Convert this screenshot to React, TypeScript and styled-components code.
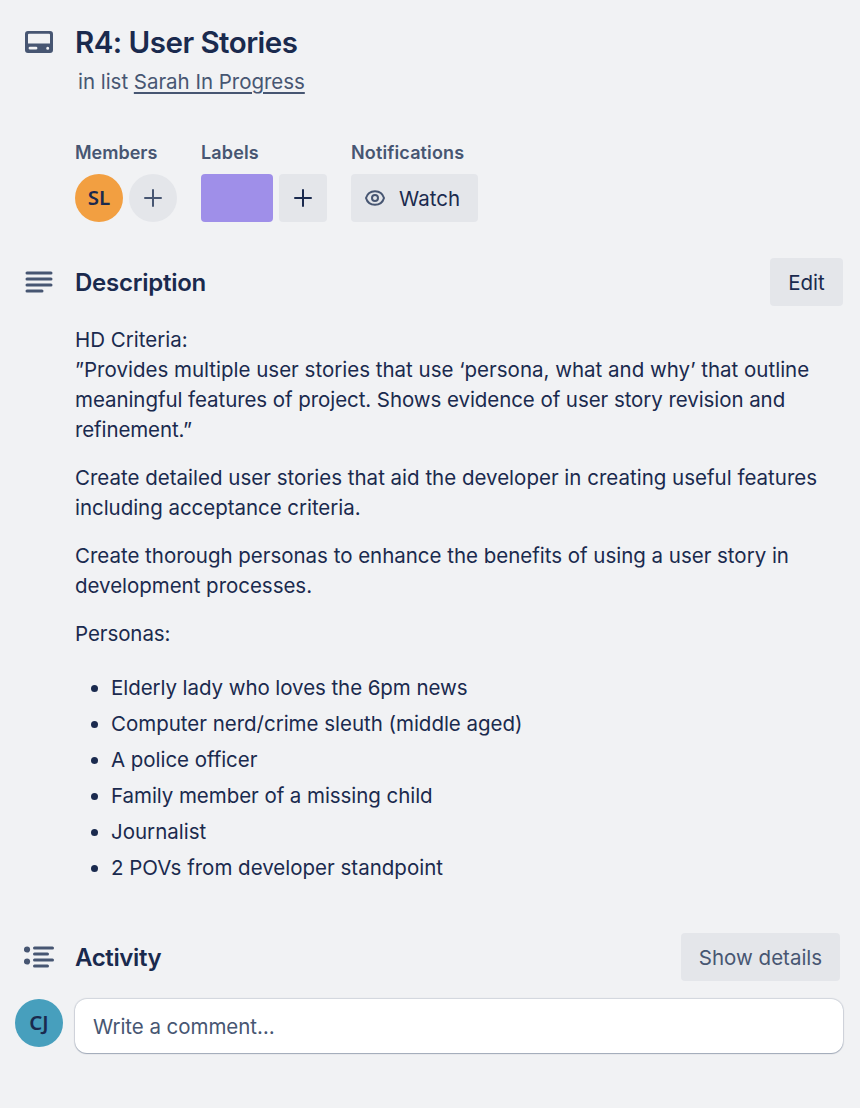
import React from "react";
import styled, { createGlobalStyle } from "styled-components";

const navy = "#1a2a4e";
const slate = "#475672";
const neutral = "#e4e6ea";

const GlobalStyle = createGlobalStyle`
  *, *::before, *::after { box-sizing: border-box; }
  body {
    margin: 0;
    background: #f1f2f4;
    color: ${navy};
    font-family: Inter, "Liberation Sans", sans-serif;
    font-size: 20.5px;
    line-height: 30px;
  }
  h1, h2, h3, p, ul { margin: 0; padding: 0; font-weight: inherit; }
`;

const Card = styled.main`
  width: 860px;
  height: 1108px;
  padding: 24px 16px 0 15px;
  display: flex;
  flex-direction: column;
`;

const Row = styled.div<{ $top?: number; $height?: number; $right?: number }>`
  display: grid;
  grid-template-columns: 48px 1fr auto;
  column-gap: 12px;
  align-items: center;
  margin-top: ${(p) => p.$top ?? 0}px;
  padding-right: ${(p) => p.$right ?? 0}px;
  height: ${(p) => (p.$height ? `${p.$height}px` : "auto")};
`;

const IconSlot = styled.span`
  display: flex;
  justify-content: center;
  svg { display: block; }
`;

const Title = styled.h1`
  font-size: 29.5px;
  line-height: 36px;
  font-weight: 600;
  letter-spacing: -0.53px;
`;

const Text = styled.span<{ $ls?: number }>`
  letter-spacing: ${(p) => p.$ls ?? 0}px;
  white-space: nowrap;
`;

const ListLine = styled.p`
  padding-left: 63px;
  margin-top: 7px;
  color: ${slate};
`;

const ListLink = styled.a`
  text-decoration: underline;
  text-decoration-thickness: 2px;
  text-underline-offset: 3px;
`;

const Details = styled.section`
  display: flex;
  gap: 24px;
  margin: 44px 0 0 60px;
`;

const Field = styled.div`
  display: flex;
  flex-direction: column;
`;

const FieldName = styled.h3<{ $ls?: number }>`
  font-size: 18px;
  line-height: 24px;
  font-weight: 600;
  color: ${slate};
  height: 33px;
  width: 0;
  white-space: nowrap;
  letter-spacing: ${(p) => p.$ls ?? 0}px;
`;

const FieldItems = styled.div`
  display: flex;
  gap: 6px;
`;

const Avatar = styled.span<{ $bg: string }>`
  width: 48px;
  height: 48px;
  border-radius: 50%;
  background: ${(p) => p.$bg};
  display: flex;
  align-items: center;
  justify-content: center;
  padding-bottom: 3px;
  font-family: "Noto Sans", "Open Sans", sans-serif;
  font-size: 20.5px;
  font-weight: 600;
`;

const Button = styled.button<{ $width: number; $round?: boolean; $subtle?: boolean }>`
  width: ${(p) => p.$width}px;
  height: 48px;
  padding: 0;
  border: 0;
  border-radius: ${(p) => (p.$round ? "50%" : "4px")};
  background: ${neutral};
  color: ${(p) => (p.$subtle ? slate : navy)};
  font: inherit;
  display: flex;
  align-items: center;
  justify-content: center;
  ${Text} { padding-top: 2px; }
`;

const WatchButton = styled(Button)`
  justify-content: flex-start;
  padding-left: 14px;
  gap: 14px;
  svg { color: ${slate}; margin-bottom: 1px; }
`;

const LabelSwatch = styled.span`
  width: 72px;
  height: 48px;
  border-radius: 4px;
  background: #9f8fe9;
`;

const Heading = styled.h2<{ $ls: number }>`
  font-size: 24px;
  line-height: 30px;
  font-weight: 600;
  letter-spacing: ${(p) => p.$ls}px;
  padding-top: 2px;
`;

const Body = styled.div`
  padding: 19px 0 0 60px;
`;

const Paragraph = styled.p`
  margin-bottom: 18px;
  display: flex;
  flex-direction: column;
`;

const Bullets = styled.ul`
  list-style: none;
  margin-top: 24px;
`;

const Bullet = styled.li`
  height: 36px;
  line-height: 30px;
  display: flex;
  padding-left: 16px;
  &::before {
    content: "";
    width: 7px;
    height: 7px;
    margin: 12px 13px 0 0;
    border-radius: 50%;
    background: ${navy};
  }
`;

const Comment = styled.div`
  height: 54px;
  border-radius: 12px;
  background: #fff;
  box-shadow: 0 1px 1px #091e4240, 0 0 1px 1px #091e4222;
  color: ${slate};
  display: flex;
  align-items: center;
  padding: 1px 0 0 18px;
`;

const CommentRow = styled.div`
  display: grid;
  grid-template-columns: 48px 768px;
  column-gap: 12px;
  margin-top: 18px;
`;

const Plus = () => (
  <svg width="20" height="20" viewBox="0 0 20 20" fill="none" stroke="currentColor" strokeWidth="2" strokeLinecap="round">
    <path d="M10 2v16M2 10h16" />
  </svg>
);

const CardIcon = () => (
  <svg width="28" height="22" viewBox="0 0 28 22" fill="none">
    <path fill={slate} fillRule="evenodd" d="M3 0h22A3 3 0 0 1 28 3v16a3 3 0 0 1-3 3H3a3 3 0 0 1-3-3V3A3 3 0 0 1 3 0ZM4 2.700Q3 2.700 3 3.700V12.500h22V3.700Q25 2.700 24 2.700ZM5 15.800a1.400 1.400 0 0 0 0 2.800h6a1.400 1.400 0 0 0 0-2.800ZM22.700 15.700a1.500 1.500 0 1 0 0 3 1.500 1.500 0 0 0 0-3Z" />
  </svg>
);

const DescriptionIcon = () => (
  <svg width="28" height="22" viewBox="0 0 28 22" stroke={slate} strokeWidth="3" strokeLinecap="round">
    <path d="M2 2h24M2 8h24M2 14h24M2 20h15" />
  </svg>
);

const ActivityIcon = () => (
  <svg width="30" height="22" viewBox="0 0 30 22" stroke={slate} strokeWidth="3" strokeLinecap="round">
    <path d="M10.500 2h18M10.500 8h13M10.500 14h18M10.500 20h13" />
    <circle cx="3" cy="3.500" r="3.100" fill={slate} stroke="none" />
    <circle cx="3" cy="15.500" r="3.100" fill={slate} stroke="none" />
  </svg>
);

const Eye = () => (
  <svg width="20" height="16" viewBox="0 0 20 16" fill="none" stroke="currentColor" strokeWidth="2">
    <path d="M1 8C2.300 3.500 5.500 1.200 10 1.200S17.700 3.500 19 8c-1.300 4.500-4.500 6.800-9 6.800S2.300 12.500 1 8Z" strokeLinejoin="round" />
    <circle cx="10" cy="8" r="3" />
  </svg>
);

type Line = { text: string; ls?: number };

const paragraphs: Line[][] = [
  [
    { text: "HD Criteria:" },
    { text: "”Provides multiple user stories that use ‘persona, what and why’ that outline" },
    { text: "meaningful features of project. Shows evidence of user story revision and", ls: -0.07 },
    { text: "refinement.”", ls: -0.12 },
  ],
  [
    { text: "Create detailed user stories that aid the developer in creating useful features" },
    { text: "including acceptance criteria.", ls: -0.04 },
  ],
  [
    { text: "Create thorough personas to enhance the benefits of using a user story in", ls: -0.02 },
    { text: "development processes.", ls: -0.03 },
  ],
  [{ text: "Personas:", ls: -0.08 }],
];

const personas: Line[] = [
  { text: "Elderly lady who loves the 6pm news", ls: -0.07 },
  { text: "Computer nerd/crime sleuth (middle aged)", ls: -0.02 },
  { text: "A police officer", ls: -0.05 },
  { text: "Family member of a missing child", ls: -0.06 },
  { text: "Journalist" },
  { text: "2 POVs from developer standpoint" },
];

export default function App() {
  return (
    <Card>
      <GlobalStyle />
      <Row $height={36}>
        <IconSlot><CardIcon /></IconSlot>
        <Title>R4: User Stories</Title>
      </Row>
      <ListLine>
        <Text $ls={-0.03}>in list <ListLink>Sarah In Progress</ListLink></Text>
      </ListLine>

      <Details>
        <Field>
          <FieldName>Members</FieldName>
          <FieldItems>
            <Avatar $bg="#f29f41">SL</Avatar>
            <Button $width={48} $round $subtle aria-label="Add member"><Plus /></Button>
          </FieldItems>
        </Field>
        <Field>
          <FieldName $ls={0.15}>Labels</FieldName>
          <FieldItems>
            <LabelSwatch />
            <Button $width={48} aria-label="Add label"><Plus /></Button>
          </FieldItems>
        </Field>
        <Field>
          <FieldName $ls={0.14}>Notifications</FieldName>
          <WatchButton $width={127}><Eye /><Text>Watch</Text></WatchButton>
        </Field>
      </Details>

      <Row $top={36} $height={48} $right={1}>
        <IconSlot><DescriptionIcon /></IconSlot>
        <Heading $ls={-0.25}>Description</Heading>
        <Button $width={73}><Text>Edit</Text></Button>
      </Row>
      <Body>
        {paragraphs.map((lines, i) => (
          <Paragraph key={i}>
            {lines.map((line) => <Text key={line.text} $ls={line.ls}>{line.text}</Text>)}
          </Paragraph>
        ))}
        <Bullets>
          {personas.map((item) => (
            <Bullet key={item.text}><Text $ls={item.ls}>{item.text}</Text></Bullet>
          ))}
        </Bullets>
      </Body>

      <Row $top={44} $height={48} $right={4}>
        <IconSlot><ActivityIcon /></IconSlot>
        <Heading $ls={-0.38}>Activity</Heading>
        <Button $width={159} $subtle><Text>Show details</Text></Button>
      </Row>
      <CommentRow>
        <Avatar $bg="#479fbd">CJ</Avatar>
        <Comment><Text $ls={-0.05}>Write a comment…</Text></Comment>
      </CommentRow>
    </Card>
  );
}
